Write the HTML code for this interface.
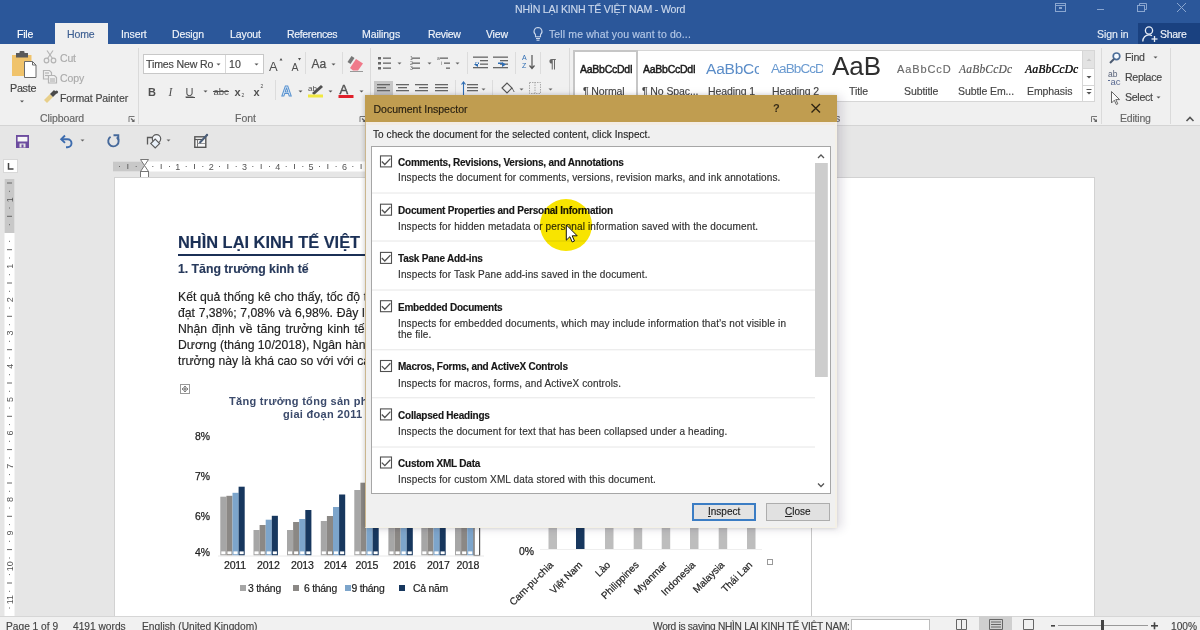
<!DOCTYPE html>
<html><head><meta charset="utf-8">
<style>
*{margin:0;padding:0;box-sizing:border-box}
html,body{width:1200px;height:630px;overflow:hidden;background:#e6e6e6;font-family:"Liberation Sans",sans-serif;position:relative}
.a{position:absolute;white-space:nowrap;-webkit-text-stroke:0.15px currentColor}
#titlebar{left:0;top:0;width:1200px;height:44px;background:#2b579a}
#ribbon{left:0;top:44px;width:1200px;height:82px;background:#f0f0f0;border-bottom:1px solid #d4d4d4}
#qat{left:0;top:126px;width:1200px;height:28px;background:#e6e6e6}
#page{left:114px;top:177px;width:981px;height:441px;background:#fff;border:1px solid #d2d2d2}
#status{left:0;top:616px;width:1200px;height:14px;background:#f1f1f1;border-top:1px solid #d6d6d6}
#dlg{left:365px;top:95px;width:472px;height:433px;background:#f0f0f0;border-left:1.5px solid #cbb68e;border-bottom:1px solid #f4f1e6;box-shadow:-1px 0 4px rgba(0,0,0,.15), 5px 1px 9px rgba(40,20,60,.13)}
</style></head><body>

<div id="titlebar" class="a"></div>
<div class="a" style="left:515px;top:3px;font-size:10.6px;color:#cbd8ec;letter-spacing:-0.2px">NHÌN LẠI KINH TẾ VIỆT NAM - Word</div>
<!-- window controls -->
<svg class="a" style="left:1050px;top:0px" width="150" height="20" viewBox="0 0 150 20">
 <g fill="none" stroke="#8aa6d0" stroke-width="1">
  <rect x="5.5" y="3.5" width="10" height="8"/>
  <line x1="5.5" y1="5.5" x2="15.5" y2="5.5"/>
  <rect x="9" y="7" width="3" height="2" fill="#8aa6d0" stroke="none"/>
  <line x1="47" y1="9.5" x2="54" y2="9.5"/>
  <rect x="87.5" y="5.5" width="7" height="6"/>
  <polyline points="89.5,5.5 89.5,3.5 96.5,3.5 96.5,9.5 94.5,9.5"/>
  <line x1="127" y1="3" x2="136" y2="12"/>
  <line x1="136" y1="3" x2="127" y2="12"/>
 </g>
</svg>
<div class="a" style="left:55px;top:23px;width:53px;height:22px;background:#f0f0f0"></div>
<div class="a" style="left:17px;top:28px;font-size:10.5px;color:#fff;letter-spacing:-0.2px">File</div>
<div class="a" style="left:67px;top:28px;font-size:10.5px;color:#3d5f92;letter-spacing:-0.1px">Home</div>
<div class="a" style="left:121px;top:28px;font-size:10.5px;color:#f0f4fa;letter-spacing:-0.1px">Insert</div>
<div class="a" style="left:172px;top:28px;font-size:10.5px;color:#f0f4fa;letter-spacing:-0.1px">Design</div>
<div class="a" style="left:230px;top:28px;font-size:10.5px;color:#f0f4fa;letter-spacing:-0.1px">Layout</div>
<div class="a" style="left:287px;top:28px;font-size:10.5px;color:#f0f4fa;letter-spacing:-0.35px">References</div>
<div class="a" style="left:362px;top:28px;font-size:10.5px;color:#f0f4fa;letter-spacing:-0.05px">Mailings</div>
<div class="a" style="left:428px;top:28px;font-size:10.5px;color:#f0f4fa;letter-spacing:-0.3px">Review</div>
<div class="a" style="left:486px;top:28px;font-size:10.5px;color:#f0f4fa;letter-spacing:-0.2px">View</div>
<svg class="a" style="left:532px;top:26px" width="12" height="16" viewBox="0 0 12 16"><g fill="none" stroke="#c9d6ea" stroke-width="1.1"><path d="M6 1.5a4 4 0 0 0-2.5 7.1v2.2h5V8.6A4 4 0 0 0 6 1.5z"/><line x1="4" y1="12.5" x2="8" y2="12.5"/><line x1="4.5" y1="14.2" x2="7.5" y2="14.2"/></g></svg>
<div class="a" style="left:549px;top:28px;font-size:10.5px;color:#b4c8e6;letter-spacing:0.12px">Tell me what you want to do...</div>
<div class="a" style="left:1097px;top:28px;font-size:10.5px;color:#e6edf6;letter-spacing:-0.1px">Sign in</div>
<div class="a" style="left:1138px;top:23px;width:62px;height:21px;background:#1a4180"></div>
<svg class="a" style="left:1141px;top:25px" width="18" height="18" viewBox="0 0 18 18"><g fill="none" stroke="#e6edf6" stroke-width="1.3"><circle cx="8" cy="5.5" r="3.6"/><path d="M1.8 16.5c0-3.8 2.6-6.6 6.2-6.6 1.2 0 2.2.3 3 .8"/><line x1="13.5" y1="11" x2="13.5" y2="17"/><line x1="10.5" y1="14" x2="16.5" y2="14"/></g></svg>
<div class="a" style="left:1160px;top:28px;font-size:10.5px;color:#f0f4fa;letter-spacing:-0.3px">Share</div>

<div id="ribbon" class="a"></div>
<!-- Clipboard group -->
<svg class="a" style="left:0;top:44px" width="140" height="82" viewBox="0 44 140 82">
 <rect x="12" y="55" width="19.5" height="21" fill="#f0c36b"/>
 <rect x="16" y="53" width="12" height="4.5" fill="#5a5a5a"/>
 <rect x="19.5" y="51" width="5" height="3" rx="1" fill="#5a5a5a"/>
 <path d="M24.5 61.5h8l3.5 3.5v12.5h-11.5z" fill="#fff" stroke="#6b6b6b" stroke-width="1"/>
 <path d="M32.5 61.5v3.5h3.5" fill="none" stroke="#6b6b6b" stroke-width="1"/>
 <path d="M20 100.5h4l-2 2z" fill="#555"/>
 <g fill="none" stroke="#b4b4b4" stroke-width="1.2">
  <circle cx="46.5" cy="60.5" r="2.3"/><circle cx="53.5" cy="60.5" r="2.3"/>
  <line x1="47.5" y1="58.5" x2="53" y2="50.5"/><line x1="52.5" y1="58.5" x2="47" y2="50.5"/>
  <path d="M43.5 70.5h6l2 2v6.5h-8z"/><path d="M48.5 75.5h6l2 2v5.5h-8z" fill="#f0f0f0"/>
  <line x1="45" y1="73" x2="49" y2="73"/><line x1="45" y1="75.5" x2="48" y2="75.5"/>
  <line x1="50" y1="79" x2="55" y2="79"/><line x1="50" y1="81" x2="55" y2="81"/>
 </g>
 <path d="M44 100l6-6 3 3-6 6z" fill="#e8cf8a"/>
 <path d="M50 94l4-4 3 3-4 4z" fill="#4a4a4a"/>
 <circle cx="56.5" cy="92" r="1.6" fill="#4a4a4a"/>
 <path d="M129.0 122v-5.5h5.5" fill="none" stroke="#777" stroke-width="1"/><path d="M131.0 118.5l3 3" stroke="#666" stroke-width="1.2"/><path d="M131.5 122h3v-3z" fill="#666"/>
 <line x1="138.5" y1="48" x2="138.5" y2="124" stroke="#dadada"/>
</svg>
<div class="a" style="left:10px;top:82px;font-size:10.8px;color:#444;letter-spacing:-0.3px">Paste</div>
<div class="a" style="left:60px;top:52px;font-size:10.5px;color:#aaa;letter-spacing:-0.2px">Cut</div>
<div class="a" style="left:60px;top:72px;font-size:10.5px;color:#aaa;letter-spacing:-0.1px">Copy</div>
<div class="a" style="left:60px;top:92px;font-size:10.5px;color:#444;letter-spacing:-0.1px">Format Painter</div>
<div class="a" style="left:40px;top:112px;font-size:10.5px;color:#666;letter-spacing:-0.1px">Clipboard</div>
<!-- Font group -->
<div class="a" style="left:143px;top:54px;width:121px;height:20px;background:#fff;border:1px solid #c8c8c8"></div>
<div class="a" style="left:225px;top:55px;width:1px;height:18px;background:#d8d8d8"></div>
<div class="a" style="left:146px;top:58px;font-size:10.6px;color:#444;letter-spacing:-0.15px">Times New Ro</div>
<div class="a" style="left:229px;top:58px;font-size:10.6px;color:#444">10</div>
<svg class="a" style="left:140px;top:44px" width="230" height="82" viewBox="140 44 230 82">
 <path d="M216.5 63.5h4l-2 2z" fill="#555"/><path d="M254.5 63.5h4l-2 2z" fill="#555"/>
 <g font-family="Liberation Sans" fill="#505050">
  <text x="269" y="70.5" font-size="13">A</text><path d="M279.5 60.5l1.5-2.5 1.5 2.5z" fill="#505050"/>
  <text x="291.5" y="70.5" font-size="10.5">A</text><path d="M298 58h3l-1.5 2.5z" fill="#505050"/>
  <text x="311.5" y="67.5" font-size="12" stroke="#505050" stroke-width="0.25">Aa</text>
  <text x="148" y="95.5" font-size="11" font-weight="bold">B</text>
  <text x="168.5" y="95.5" font-size="11.5" font-style="italic" font-family="Liberation Serif">I</text>
  <text x="185.5" y="95.5" font-size="11" text-decoration="underline">U</text>
  <text x="213.5" y="95" font-size="9.5">abc</text>
  <text x="234.5" y="95.5" font-size="11" font-weight="bold">x</text><text x="241.5" y="97" font-size="5">2</text>
  <text x="253.5" y="95.5" font-size="11" font-weight="bold">x</text><text x="260.5" y="88" font-size="5">2</text>
 </g>
 <line x1="213" y1="91.5" x2="229" y2="91.5" stroke="#505050" stroke-width="1"/>
 <line x1="186" y1="97.5" x2="195" y2="97.5" stroke="#505050" stroke-width="1"/>
 <path d="M331.5 63.5h4l-2 2z" fill="#555"/>
 <line x1="305.5" y1="52" x2="305.5" y2="74" stroke="#dcdcdc"/>
 <line x1="342.5" y1="52" x2="342.5" y2="74" stroke="#dcdcdc"/>
 <path d="M350 68l6-9 7 4.5-5 7h-5z" fill="#f07a8a"/><path d="M347.5 62l4-6 3 2-4 6z" fill="#777"/>
 <line x1="350" y1="71.5" x2="363" y2="71.5" stroke="#999"/>
 <path d="M203.5 90.5h4l-2 2z" fill="#555"/>
 <line x1="275.5" y1="80" x2="275.5" y2="100" stroke="#dcdcdc"/>
 <text x="281.5" y="96" font-size="14" font-weight="bold" font-family="Liberation Sans" fill="#e8f1fb" stroke="#5a93cf" stroke-width="1">A</text>
 <path d="M298.5 90.5h4l-2 2z" fill="#555"/>
 <text x="308" y="91" font-size="8" font-family="Liberation Sans" fill="#505050">ab</text>
 <path d="M312 93l9-8 2 2-9 8z" fill="#505050"/>
 <rect x="308" y="94.5" width="15" height="3" fill="#f0e840"/>
 <path d="M328.5 90.5h4l-2 2z" fill="#555"/>
 <text x="339.5" y="94" font-size="13" font-family="Liberation Sans" fill="#505050" stroke="#505050" stroke-width="0.4">A</text>
 <rect x="338.5" y="95" width="15" height="3" fill="#e0202a"/>
 <path d="M359.5 90.5h4l-2 2z" fill="#555"/>
</svg>
<div class="a" style="left:235px;top:112px;font-size:10.5px;color:#666">Font</div>
<svg class="a" style="left:355px;top:112px" width="12" height="12" viewBox="355 112 12 12"><path d="M360.0 122v-5.5h5.5" fill="none" stroke="#777" stroke-width="1"/><path d="M362.0 118.5l3 3" stroke="#666" stroke-width="1.2"/><path d="M362.5 122h3v-3z" fill="#666"/></svg>
<!-- Paragraph group -->
<svg class="a" style="left:365px;top:44px" width="210" height="52" viewBox="365 44 210 52">
 <line x1="370.5" y1="48" x2="370.5" y2="124" stroke="#dadada"/>
 <g fill="#666">
  <rect x="378" y="57" width="3" height="2.5"/><rect x="378" y="62" width="3" height="2.5"/><rect x="378" y="67" width="3" height="2.5"/>
  <rect x="383" y="57.5" width="8" height="1.3"/><rect x="383" y="62.5" width="8" height="1.3"/><rect x="383" y="67.5" width="8" height="1.3"/>
  <path d="M397.5 62.5h4l-2 2z"/>
  <rect x="412" y="57.5" width="8" height="1.3"/><rect x="412" y="62.5" width="8" height="1.3"/><rect x="412" y="67.5" width="8" height="1.3"/>
  <path d="M427.5 62.5h4l-2 2z"/>
  <rect x="440" y="57.5" width="8" height="1.3"/><rect x="444" y="62.5" width="6" height="1.3"/><rect x="446" y="67.5" width="4" height="1.3"/>
  <path d="M455.5 62.5h4l-2 2z"/>
  <rect x="473" y="56.5" width="15" height="1.3"/><rect x="480" y="60" width="8" height="1.3"/><rect x="480" y="63.5" width="8" height="1.3"/><rect x="473" y="67" width="15" height="1.3"/>
  <rect x="493" y="56.5" width="15" height="1.3"/><rect x="500" y="60" width="8" height="1.3"/><rect x="500" y="63.5" width="8" height="1.3"/><rect x="493" y="67" width="15" height="1.3"/>
 </g>
 <g font-family="Liberation Sans" font-size="5" fill="#666"><text x="410" y="60">1</text><text x="410" y="65">2</text><text x="410" y="70">3</text><text x="437" y="60">a</text><text x="441" y="65">i</text></g>
 <path d="M478 62l-4 2.5 4 2.5z M475 62.5h4v1.5h-4z" fill="#2f6db3"/>
 <path d="M502 62l4 2.5-4 2.5z M498 62.5h5v1.5h-5z" fill="#2f6db3"/>
 <g font-family="Liberation Sans" font-size="7" fill="#2f6db3"><text x="522" y="60">A</text><text x="522" y="68">Z</text></g>
 <path d="M532 55v13M529.5 65.5l2.5 3 2.5-3" fill="none" stroke="#555" stroke-width="1.2"/>
 <text x="549" y="68" font-size="13" font-family="Liberation Sans" font-weight="bold" fill="#666">¶</text>
 <line x1="467.5" y1="52" x2="467.5" y2="74" stroke="#dcdcdc"/>
 <line x1="515.5" y1="52" x2="515.5" y2="74" stroke="#dcdcdc"/>
 <line x1="540.5" y1="52" x2="540.5" y2="74" stroke="#dcdcdc"/>
 <rect x="374" y="81" width="19" height="14" fill="#c6c6c6"/>
 <g fill="#666">
  <rect x="377" y="84" width="13" height="1.3"/><rect x="377" y="87" width="9" height="1.3"/><rect x="377" y="90" width="13" height="1.3"/>
  <rect x="396" y="84" width="13" height="1.3"/><rect x="398" y="87" width="9" height="1.3"/><rect x="396" y="90" width="13" height="1.3"/>
  <rect x="415" y="84" width="13" height="1.3"/><rect x="419" y="87" width="9" height="1.3"/><rect x="415" y="90" width="13" height="1.3"/>
  <rect x="435" y="84" width="13" height="1.3"/><rect x="435" y="87" width="13" height="1.3"/><rect x="435" y="90" width="13" height="1.3"/>
  <rect x="467" y="84" width="11" height="1.3"/><rect x="467" y="87" width="11" height="1.3"/><rect x="467" y="90" width="11" height="1.3"/>
  <path d="M481.5 88.5h4l-2 2z"/><path d="M519.5 88.5h4l-2 2z"/><path d="M548.5 88.5h4l-2 2z"/>
 </g>
 <path d="M463.5 82v13M461.5 84.5l2-2.5 2 2.5" fill="none" stroke="#2f6db3" stroke-width="1.1"/>
 <line x1="455.5" y1="80" x2="455.5" y2="96" stroke="#dcdcdc"/>
 <line x1="492.5" y1="80" x2="492.5" y2="96" stroke="#dcdcdc"/>
 <path d="M502 88l5-5 5 5-5 5z" fill="none" stroke="#555" stroke-width="1.1"/><path d="M512 88c1 2 2 3 2 4" stroke="#555" fill="none"/>
 <rect x="529.5" y="82.5" width="11" height="11" fill="none" stroke="#aaa" stroke-dasharray="1.5 1"/>
 <line x1="535" y1="82" x2="535" y2="94" stroke="#aaa" stroke-dasharray="1.5 1"/>
 <line x1="569.5" y1="48" x2="569.5" y2="124" stroke="#dadada"/>
</svg>
<!-- Styles gallery -->
<div class="a" style="left:573px;top:50px;width:522px;height:52px;background:#fff;border:1px solid #d6d6d6"></div>
<div class="a" style="left:573px;top:50px;width:65px;height:52px;border:2px solid #c6c6c6"></div>
<div class="a" style="left:1082px;top:50px;width:13px;height:52px;border:1px solid #d6d6d6;background:#fff"></div>
<div class="a" style="left:1083px;top:51px;width:11px;height:17px;background:#e3e3e3"></div>
<div class="a" style="left:1082px;top:68px;width:13px;height:1px;background:#d6d6d6"></div>
<div class="a" style="left:1082px;top:85px;width:13px;height:1px;background:#d6d6d6"></div>
<svg class="a" style="left:1082px;top:50px" width="14" height="52" viewBox="0 0 14 52">
 <path d="M4.5 11h5l-2.5-2.5z" fill="#c8c8c8"/>
 <path d="M4.5 26h5l-2.5 2.5z" fill="#555"/>
 <rect x="4.5" y="39" width="5" height="1" fill="#555"/><path d="M4.5 42h5l-2.5 2.5z" fill="#555"/>
</svg>
<div class="a" style="left:580px;top:63px;font-size:10.5px;color:#1a1a1a;-webkit-text-stroke:0.45px #1a1a1a;letter-spacing:-0.25px;width:52px;overflow:hidden">AaBbCcDdE</div>
<div class="a" style="left:643px;top:63px;font-size:10.5px;color:#1a1a1a;-webkit-text-stroke:0.45px #1a1a1a;letter-spacing:-0.25px;width:52px;overflow:hidden">AaBbCcDdE</div>
<div class="a" style="left:706px;top:60px;font-size:15.5px;color:#5b8dc8;-webkit-text-stroke:0;letter-spacing:-0.2px;width:53px;overflow:hidden">AaBbCc</div>
<div class="a" style="left:771px;top:61px;font-size:13.5px;color:#6a9ad0;-webkit-text-stroke:0;letter-spacing:-0.9px;width:52px;overflow:hidden">AaBbCcD</div>
<div class="a" style="left:832px;top:51px;font-size:26px;color:#2e2e2e;-webkit-text-stroke:0;letter-spacing:0px">AaB</div>
<div class="a" style="left:897px;top:63px;font-size:11px;color:#6a6a6a;letter-spacing:0.9px">AaBbCcD</div>
<div class="a" style="left:959px;top:63px;font-size:11.5px;color:#555;font-style:italic;font-family:'Liberation Serif';letter-spacing:0.2px">AaBbCcDc</div>
<div class="a" style="left:1025px;top:63px;font-size:11.5px;color:#222;font-style:italic;text-shadow:0.3px 0 0 #222;font-family:'Liberation Serif';letter-spacing:0.2px">AaBbCcDc</div>
<div class="a" style="left:583px;top:85px;font-size:10.5px;color:#444;letter-spacing:-0.1px">¶ Normal</div>
<div class="a" style="left:642px;top:85px;font-size:10.5px;color:#444;letter-spacing:-0.1px">¶ No Spac...</div>
<div class="a" style="left:708px;top:85px;font-size:10.5px;color:#444;letter-spacing:-0.1px">Heading 1</div>
<div class="a" style="left:772px;top:85px;font-size:10.5px;color:#444;letter-spacing:-0.1px">Heading 2</div>
<div class="a" style="left:849px;top:85px;font-size:10.5px;color:#444;letter-spacing:-0.1px">Title</div>
<div class="a" style="left:904px;top:85px;font-size:10.5px;color:#444;letter-spacing:-0.1px">Subtitle</div>
<div class="a" style="left:958px;top:85px;font-size:10.5px;color:#444;letter-spacing:-0.1px">Subtle Em...</div>
<div class="a" style="left:1027px;top:85px;font-size:10.5px;color:#444;letter-spacing:-0.1px">Emphasis</div>
<div class="a" style="left:835px;top:112px;font-size:10.5px;color:#666">s</div>
<!-- Editing -->
<svg class="a" style="left:1090px;top:44px" width="110" height="82" viewBox="1090 44 110 82">
 <path d="M1091.5 122v-5.5h5.5" fill="none" stroke="#777" stroke-width="1"/><path d="M1093.5 118.5l3 3" stroke="#666" stroke-width="1.2"/><path d="M1094 122h3v-3z" fill="#666"/>
 <line x1="1101.5" y1="48" x2="1101.5" y2="124" stroke="#dadada"/>
 <line x1="1170.5" y1="48" x2="1170.5" y2="124" stroke="#dadada"/>
 <circle cx="1116.5" cy="56.3" r="3.3" fill="#f7fbff" stroke="#4b6d98" stroke-width="1.7"/>
 <line x1="1114" y1="59" x2="1110" y2="63" stroke="#4a5a70" stroke-width="2"/>
 <path d="M1153.5 56.5h4l-2 2z" fill="#555"/>
 <g font-family="Liberation Sans"><text x="1108" y="76.5" font-size="8.5" fill="#566078">ab</text><text x="1110.5" y="84.5" font-size="9.5" fill="#5b6b92">ac</text></g><path d="M1108 80.5h2" stroke="#5b6b92"/>
 <path d="M1111.5 91.5v11.5l2.8-2.8 2 4.3 1.5-.7-2-4.2h3.8z" fill="#fafafa" stroke="#666" stroke-width="1"/>
 <path d="M1156.5 96.5h4l-2 2z" fill="#555"/>
 <path d="M1186.5 121l3.5-3.5 3.5 3.5" fill="none" stroke="#555" stroke-width="1.6"/>
</svg>
<div class="a" style="left:1125px;top:51px;font-size:10.6px;color:#444;letter-spacing:-0.2px">Find</div>
<div class="a" style="left:1125px;top:71px;font-size:10.6px;color:#444;letter-spacing:-0.3px">Replace</div>
<div class="a" style="left:1125px;top:91px;font-size:10.6px;color:#444;letter-spacing:-0.3px">Select</div>
<div class="a" style="left:1120px;top:112px;font-size:10.5px;color:#666;letter-spacing:-0.2px">Editing</div>

<div id="qat" class="a"></div>
<svg class="a" style="left:0;top:126px" width="220" height="28" viewBox="0 126 220 28">
 <path d="M16.8 135.8h11.4v11.4h-11.4z" fill="#f7f7f7" stroke="#6d4c9f" stroke-width="1.6"/>
 <rect x="16" y="135" width="13" height="1.8" fill="#6d4c9f"/>
 <rect x="16" y="141.5" width="13" height="6" fill="#6d4c9f"/>
 <rect x="19.5" y="143.5" width="6" height="4" fill="#e6e6e6"/>
 <rect x="21.5" y="144.5" width="2" height="3" fill="#6d4c9f"/>
 <path d="M61.5 139.2h6a4 4 0 0 1 0 8h-1.5" fill="none" stroke="#3d6cae" stroke-width="1.9"/>
 <path d="M65 135.5l-3.8 3.7 3.8 3.7" fill="none" stroke="#3d6cae" stroke-width="1.9"/>
 <path d="M80.5 139.5h4l-2 2z" fill="#666"/>
 <path d="M116.8 137.2a5.2 5.2 0 1 1-6.2-.4" fill="none" stroke="#46699b" stroke-width="1.9"/>
 <path d="M113.5 135.2h4.8v4.6" fill="none" stroke="#46699b" stroke-width="1.9"/>
 <path d="M147.5 144.5v-7h7" fill="none" stroke="#5a5a5a" stroke-width="1.3"/>
 <circle cx="156.5" cy="138.8" r="4.2" fill="#f3f6fa" stroke="#5a5a5a" stroke-width="1.2"/>
 <path d="M155.2 139.2l4.4 4.4-4.4 4.4-4.4-4.4z" fill="#e9f1fa" stroke="#5a5a5a" stroke-width="1.2"/>
 <path d="M166.5 139.5h4l-2 2z" fill="#666"/>
 <rect x="194.8" y="136.8" width="11" height="10.5" fill="#f7f7f7" stroke="#555" stroke-width="1.4"/>
 <line x1="194.8" y1="139.5" x2="202" y2="139.5" stroke="#555" stroke-width="1.2"/>
 <line x1="197.5" y1="139.5" x2="197.5" y2="147" stroke="#777" stroke-width="1"/>
 <line x1="197.5" y1="143.5" x2="205" y2="143.5" stroke="#999" stroke-width="1"/>
 <path d="M199.5 143l7-7.5" stroke="#4b5e78" stroke-width="2"/>
 <circle cx="207" cy="135" r="1.2" fill="#4b5e78"/>
</svg>
<svg class="a" style="left:110px;top:155px" width="260" height="26" viewBox="110 155 260 26">
<rect x="113" y="161.5" width="257" height="10" fill="#fff"/>
<rect x="113" y="161.5" width="31.5" height="10" fill="#c8c8c8"/>
<rect x="119.0" y="166" width="1" height="1" fill="#666"/>
<line x1="127.8" y1="164" x2="127.8" y2="169" stroke="#666" stroke-width="1"/>
<rect x="135.7" y="166" width="1" height="1" fill="#666"/>
<rect x="152.3" y="166" width="1" height="1" fill="#666"/>
<line x1="161.2" y1="164" x2="161.2" y2="169" stroke="#666" stroke-width="1"/>
<rect x="169.0" y="166" width="1" height="1" fill="#666"/>
<text x="177.8" y="170" font-size="9" text-anchor="middle" font-family="Liberation Sans" fill="#555">1</text>
<rect x="185.7" y="166" width="1" height="1" fill="#666"/>
<line x1="194.5" y1="164" x2="194.5" y2="169" stroke="#666" stroke-width="1"/>
<rect x="202.3" y="166" width="1" height="1" fill="#666"/>
<text x="211.2" y="170" font-size="9" text-anchor="middle" font-family="Liberation Sans" fill="#555">2</text>
<rect x="219.0" y="166" width="1" height="1" fill="#666"/>
<line x1="227.8" y1="164" x2="227.8" y2="169" stroke="#666" stroke-width="1"/>
<rect x="235.7" y="166" width="1" height="1" fill="#666"/>
<text x="244.5" y="170" font-size="9" text-anchor="middle" font-family="Liberation Sans" fill="#555">3</text>
<rect x="252.3" y="166" width="1" height="1" fill="#666"/>
<line x1="261.2" y1="164" x2="261.2" y2="169" stroke="#666" stroke-width="1"/>
<rect x="269.0" y="166" width="1" height="1" fill="#666"/>
<text x="277.8" y="170" font-size="9" text-anchor="middle" font-family="Liberation Sans" fill="#555">4</text>
<rect x="285.7" y="166" width="1" height="1" fill="#666"/>
<line x1="294.5" y1="164" x2="294.5" y2="169" stroke="#666" stroke-width="1"/>
<rect x="302.3" y="166" width="1" height="1" fill="#666"/>
<text x="311.1" y="170" font-size="9" text-anchor="middle" font-family="Liberation Sans" fill="#555">5</text>
<rect x="319.0" y="166" width="1" height="1" fill="#666"/>
<line x1="327.8" y1="164" x2="327.8" y2="169" stroke="#666" stroke-width="1"/>
<rect x="335.6" y="166" width="1" height="1" fill="#666"/>
<text x="344.5" y="170" font-size="9" text-anchor="middle" font-family="Liberation Sans" fill="#555">6</text>
<rect x="352.3" y="166" width="1" height="1" fill="#666"/>
<line x1="361.1" y1="164" x2="361.1" y2="169" stroke="#666" stroke-width="1"/>
<path d="M140.5 159.5h8l-4 6z M140.5 171.5h8l-4-6z" fill="#fff" stroke="#777" stroke-width="1"/>
<rect x="140.5" y="171.5" width="8" height="6" fill="#fff" stroke="#777" stroke-width="1"/>
</svg>
<svg class="a" style="left:0;top:155px" width="20" height="461" viewBox="0 155 20 461">
<rect x="3.5" y="159.5" width="14" height="13" fill="#fff" stroke="#d8d8d8"/>
<path d="M8.5 163v6h5" fill="none" stroke="#444" stroke-width="1.5"/>
<rect x="4.5" y="179" width="10" height="437" fill="#fff"/>
<rect x="4.5" y="179" width="10" height="54" fill="#c8c8c8"/>
<line x1="7" y1="183.0" x2="12" y2="183.0" stroke="#666" stroke-width="1"/>
<rect x="9" y="190.8" width="1" height="1" fill="#666"/>
<text x="0" y="0" font-size="9" text-anchor="middle" font-family="Liberation Sans" fill="#555" transform="translate(12.5 199.7) rotate(-90)">1</text>
<rect x="9" y="207.5" width="1" height="1" fill="#666"/>
<line x1="7" y1="216.3" x2="12" y2="216.3" stroke="#666" stroke-width="1"/>
<rect x="9" y="224.2" width="1" height="1" fill="#666"/>
<rect x="9" y="240.8" width="1" height="1" fill="#666"/>
<line x1="7" y1="249.7" x2="12" y2="249.7" stroke="#666" stroke-width="1"/>
<rect x="9" y="257.5" width="1" height="1" fill="#666"/>
<text x="0" y="0" font-size="9" text-anchor="middle" font-family="Liberation Sans" fill="#555" transform="translate(12.5 266.3) rotate(-90)">1</text>
<rect x="9" y="274.2" width="1" height="1" fill="#666"/>
<line x1="7" y1="283.0" x2="12" y2="283.0" stroke="#666" stroke-width="1"/>
<rect x="9" y="290.8" width="1" height="1" fill="#666"/>
<text x="0" y="0" font-size="9" text-anchor="middle" font-family="Liberation Sans" fill="#555" transform="translate(12.5 299.7) rotate(-90)">2</text>
<rect x="9" y="307.5" width="1" height="1" fill="#666"/>
<line x1="7" y1="316.3" x2="12" y2="316.3" stroke="#666" stroke-width="1"/>
<rect x="9" y="324.2" width="1" height="1" fill="#666"/>
<text x="0" y="0" font-size="9" text-anchor="middle" font-family="Liberation Sans" fill="#555" transform="translate(12.5 333.0) rotate(-90)">3</text>
<rect x="9" y="340.8" width="1" height="1" fill="#666"/>
<line x1="7" y1="349.7" x2="12" y2="349.7" stroke="#666" stroke-width="1"/>
<rect x="9" y="357.5" width="1" height="1" fill="#666"/>
<text x="0" y="0" font-size="9" text-anchor="middle" font-family="Liberation Sans" fill="#555" transform="translate(12.5 366.3) rotate(-90)">4</text>
<rect x="9" y="374.2" width="1" height="1" fill="#666"/>
<line x1="7" y1="383.0" x2="12" y2="383.0" stroke="#666" stroke-width="1"/>
<rect x="9" y="390.8" width="1" height="1" fill="#666"/>
<text x="0" y="0" font-size="9" text-anchor="middle" font-family="Liberation Sans" fill="#555" transform="translate(12.5 399.6) rotate(-90)">5</text>
<rect x="9" y="407.5" width="1" height="1" fill="#666"/>
<line x1="7" y1="416.3" x2="12" y2="416.3" stroke="#666" stroke-width="1"/>
<rect x="9" y="424.1" width="1" height="1" fill="#666"/>
<text x="0" y="0" font-size="9" text-anchor="middle" font-family="Liberation Sans" fill="#555" transform="translate(12.5 433.0) rotate(-90)">6</text>
<rect x="9" y="440.8" width="1" height="1" fill="#666"/>
<line x1="7" y1="449.6" x2="12" y2="449.6" stroke="#666" stroke-width="1"/>
<rect x="9" y="457.5" width="1" height="1" fill="#666"/>
<text x="0" y="0" font-size="9" text-anchor="middle" font-family="Liberation Sans" fill="#555" transform="translate(12.5 466.3) rotate(-90)">7</text>
<rect x="9" y="474.1" width="1" height="1" fill="#666"/>
<line x1="7" y1="483.0" x2="12" y2="483.0" stroke="#666" stroke-width="1"/>
<rect x="9" y="490.8" width="1" height="1" fill="#666"/>
<text x="0" y="0" font-size="9" text-anchor="middle" font-family="Liberation Sans" fill="#555" transform="translate(12.5 499.6) rotate(-90)">8</text>
<rect x="9" y="507.5" width="1" height="1" fill="#666"/>
<line x1="7" y1="516.3" x2="12" y2="516.3" stroke="#666" stroke-width="1"/>
<rect x="9" y="524.1" width="1" height="1" fill="#666"/>
<text x="0" y="0" font-size="9" text-anchor="middle" font-family="Liberation Sans" fill="#555" transform="translate(12.5 533.0) rotate(-90)">9</text>
<rect x="9" y="540.8" width="1" height="1" fill="#666"/>
<line x1="7" y1="549.6" x2="12" y2="549.6" stroke="#666" stroke-width="1"/>
<rect x="9" y="557.5" width="1" height="1" fill="#666"/>
<text x="0" y="0" font-size="9" text-anchor="middle" font-family="Liberation Sans" fill="#555" transform="translate(12.5 566.3) rotate(-90)">10</text>
<rect x="9" y="574.1" width="1" height="1" fill="#666"/>
<line x1="7" y1="583.0" x2="12" y2="583.0" stroke="#666" stroke-width="1"/>
<rect x="9" y="590.8" width="1" height="1" fill="#666"/>
<text x="0" y="0" font-size="9" text-anchor="middle" font-family="Liberation Sans" fill="#555" transform="translate(12.5 599.6) rotate(-90)">11</text>
<rect x="9" y="607.5" width="1" height="1" fill="#666"/>
</svg>
<div id="page" class="a"></div>
<div class="a" style="left:811px;top:525px;width:1px;height:91px;background:#c8c8c8"></div>
<div class="a" style="left:178px;top:232.5px;font-size:16.4px;font-weight:bold;color:#1b3056;letter-spacing:0px">NHÌN LẠI KINH TẾ VIỆT NAM</div>
<div class="a" style="left:178px;top:254px;width:200px;height:2px;background:#1b3056"></div>
<div class="a" style="left:178px;top:261.5px;font-size:12.25px;font-weight:bold;color:#283a5c">1. Tăng trưởng kinh tế</div>
<div class="a" style="left:178px;top:289.0px;font-size:12.2px;line-height:16.4px;color:#222;word-spacing:0.2px">Kết quả thống kê cho thấy, tốc độ tăng</div>
<div class="a" style="left:178px;top:305.0px;font-size:12.2px;line-height:16.4px;color:#222;word-spacing:0.3px">đạt 7,38%; 7,08% và 6,98%. Đây là</div>
<div class="a" style="left:178px;top:321.0px;font-size:12.2px;line-height:16.4px;color:#222;word-spacing:1.3px">Nhận định về tăng trưởng kinh tế Việt</div>
<div class="a" style="left:178px;top:337.0px;font-size:12.2px;line-height:16.4px;color:#222;word-spacing:0px">Dương (tháng 10/2018), Ngân hàng</div>
<div class="a" style="left:178px;top:353.0px;font-size:12.2px;line-height:16.4px;color:#222;word-spacing:0px">trưởng này là khá cao so với với các</div>

<svg class="a" style="left:0;top:0" width="1200" height="630" viewBox="0 0 1200 630">
<rect x="180.5" y="384.5" width="9" height="9" fill="#fff" stroke="#999"/>
<path d="M185 386v6M182 389h6" stroke="#555" stroke-width="0.8"/><path d="M183.5 387.5l1.5-1.5 1.5 1.5M183.5 390.5l1.5 1.5 1.5-1.5M183.5 387.5l-1.5 1.5 1.5 1.5M186.5 387.5l1.5 1.5-1.5 1.5" fill="none" stroke="#555" stroke-width="0.6"/>
<g font-family="Liberation Sans" font-weight="bold" font-size="11" fill="#3b4a6b" letter-spacing="0.3"><text x="229" y="405">Tăng trưởng tổng sản phẩm</text><text x="283" y="418">giai đoạn 2011 - 2018</text></g>
<g font-family="Liberation Sans" font-size="10.4" fill="#1e1e1e" stroke="#1e1e1e" stroke-width="0.25">
<text x="195" y="439.8">8%</text>
<text x="195" y="479.8">7%</text>
<text x="195" y="519.8">6%</text>
<text x="195" y="555.8">4%</text>
</g>
<rect x="220.3" y="496.7" width="6.1" height="58.8" fill="#a6a6a6"/>
<rect x="221.3" y="551.4" width="4.1" height="2.8" fill="#fff"/>
<rect x="226.4" y="495.8" width="6.1" height="59.7" fill="#8b8885"/>
<rect x="227.4" y="551.4" width="4.1" height="2.8" fill="#fff"/>
<rect x="232.5" y="492.8" width="6.1" height="62.7" fill="#7da5cb"/>
<rect x="233.5" y="551.4" width="4.1" height="2.8" fill="#fff"/>
<rect x="238.6" y="486.7" width="6.1" height="68.8" fill="#17375e"/>
<rect x="239.6" y="551.4" width="4.1" height="2.8" fill="#fff"/>
<rect x="253.5" y="530.0" width="6.1" height="25.5" fill="#a6a6a6"/>
<rect x="254.5" y="551.4" width="4.1" height="2.8" fill="#fff"/>
<rect x="259.6" y="525.0" width="6.1" height="30.5" fill="#8b8885"/>
<rect x="260.6" y="551.4" width="4.1" height="2.8" fill="#fff"/>
<rect x="265.7" y="519.7" width="6.1" height="35.8" fill="#7da5cb"/>
<rect x="266.7" y="551.4" width="4.1" height="2.8" fill="#fff"/>
<rect x="271.8" y="515.8" width="6.1" height="39.7" fill="#17375e"/>
<rect x="272.8" y="551.4" width="4.1" height="2.8" fill="#fff"/>
<rect x="287.0" y="530.0" width="6.1" height="25.5" fill="#a6a6a6"/>
<rect x="288.0" y="551.4" width="4.1" height="2.8" fill="#fff"/>
<rect x="293.1" y="522.0" width="6.1" height="33.5" fill="#8b8885"/>
<rect x="294.1" y="551.4" width="4.1" height="2.8" fill="#fff"/>
<rect x="299.2" y="519.0" width="6.1" height="36.5" fill="#7da5cb"/>
<rect x="300.2" y="551.4" width="4.1" height="2.8" fill="#fff"/>
<rect x="305.3" y="510.0" width="6.1" height="45.5" fill="#17375e"/>
<rect x="306.3" y="551.4" width="4.1" height="2.8" fill="#fff"/>
<rect x="320.8" y="521.0" width="6.1" height="34.5" fill="#a6a6a6"/>
<rect x="321.8" y="551.4" width="4.1" height="2.8" fill="#fff"/>
<rect x="326.9" y="516.0" width="6.1" height="39.5" fill="#8b8885"/>
<rect x="327.9" y="551.4" width="4.1" height="2.8" fill="#fff"/>
<rect x="333.0" y="507.0" width="6.1" height="48.5" fill="#7da5cb"/>
<rect x="334.0" y="551.4" width="4.1" height="2.8" fill="#fff"/>
<rect x="339.1" y="494.5" width="6.1" height="61.0" fill="#17375e"/>
<rect x="340.1" y="551.4" width="4.1" height="2.8" fill="#fff"/>
<rect x="354.3" y="490.0" width="6.1" height="65.5" fill="#a6a6a6"/>
<rect x="355.3" y="551.4" width="4.1" height="2.8" fill="#fff"/>
<rect x="360.4" y="482.7" width="6.1" height="72.8" fill="#8b8885"/>
<rect x="361.4" y="551.4" width="4.1" height="2.8" fill="#fff"/>
<rect x="366.5" y="470.0" width="6.1" height="85.5" fill="#7da5cb"/>
<rect x="367.5" y="551.4" width="4.1" height="2.8" fill="#fff"/>
<rect x="372.6" y="470.0" width="6.1" height="85.5" fill="#17375e"/>
<rect x="373.6" y="551.4" width="4.1" height="2.8" fill="#fff"/>
<rect x="388.4" y="515.0" width="6.1" height="40.5" fill="#a6a6a6"/>
<rect x="389.4" y="551.4" width="4.1" height="2.8" fill="#fff"/>
<rect x="394.5" y="512.0" width="6.1" height="43.5" fill="#8b8885"/>
<rect x="395.5" y="551.4" width="4.1" height="2.8" fill="#fff"/>
<rect x="400.6" y="508.0" width="6.1" height="47.5" fill="#7da5cb"/>
<rect x="401.6" y="551.4" width="4.1" height="2.8" fill="#fff"/>
<rect x="406.7" y="505.0" width="6.1" height="50.5" fill="#17375e"/>
<rect x="407.7" y="551.4" width="4.1" height="2.8" fill="#fff"/>
<rect x="421.3" y="515.0" width="6.1" height="40.5" fill="#a6a6a6"/>
<rect x="422.3" y="551.4" width="4.1" height="2.8" fill="#fff"/>
<rect x="427.4" y="512.0" width="6.1" height="43.5" fill="#8b8885"/>
<rect x="428.4" y="551.4" width="4.1" height="2.8" fill="#fff"/>
<rect x="433.5" y="508.0" width="6.1" height="47.5" fill="#7da5cb"/>
<rect x="434.5" y="551.4" width="4.1" height="2.8" fill="#fff"/>
<rect x="439.6" y="505.0" width="6.1" height="50.5" fill="#17375e"/>
<rect x="440.6" y="551.4" width="4.1" height="2.8" fill="#fff"/>
<rect x="455.0" y="515.0" width="6.1" height="40.5" fill="#a6a6a6"/>
<rect x="456.0" y="551.4" width="4.1" height="2.8" fill="#fff"/>
<rect x="461.1" y="512.0" width="6.1" height="43.5" fill="#8b8885"/>
<rect x="462.1" y="551.4" width="4.1" height="2.8" fill="#fff"/>
<rect x="467.2" y="508.0" width="6.1" height="47.5" fill="#7da5cb"/>
<rect x="468.2" y="551.4" width="4.1" height="2.8" fill="#fff"/>
<rect x="474" y="505" width="5.6" height="50.5" fill="#fff" stroke="#555" stroke-width="1.2"/>
<line x1="218" y1="556" x2="484" y2="556" stroke="#e8e8e8"/>
<g font-family="Liberation Sans" font-size="10.6" fill="#1e1e1e" stroke="#1e1e1e" stroke-width="0.2" letter-spacing="-0.25">
<text x="224" y="569">2011</text>
<text x="257" y="569">2012</text>
<text x="291" y="569">2013</text>
<text x="324" y="569">2014</text>
<text x="355.5" y="569">2015</text>
<text x="393" y="569">2016</text>
<text x="427" y="569">2017</text>
<text x="456.5" y="569">2018</text>
</g>
<rect x="240" y="585" width="6" height="6" fill="#a6a6a6"/>
<rect x="293" y="585" width="6" height="6" fill="#8b8885"/>
<rect x="345" y="585" width="6" height="6" fill="#7da5cb"/>
<rect x="399" y="585" width="6" height="6" fill="#17375e"/>
<g font-family="Liberation Sans" font-size="10.4" fill="#1e1e1e" stroke="#1e1e1e" stroke-width="0.2" letter-spacing="-0.25">
<text x="248" y="592">3 tháng</text>
<text x="304" y="592">6 tháng</text>
<text x="351.5" y="592">9 tháng</text>
<text x="413" y="592">Cả năm</text>
</g>
<text x="519" y="555" font-family="Liberation Sans" font-size="10.4" fill="#1e1e1e" stroke="#1e1e1e" stroke-width="0.25">0%</text>
<rect x="548.5" y="520" width="8.5" height="29.5" fill="#bdbdbd"/>
<rect x="576" y="520" width="8.5" height="29.5" fill="#17375e"/>
<rect x="605" y="520" width="8.5" height="29.5" fill="#bdbdbd"/>
<rect x="633.7" y="520" width="8.5" height="29.5" fill="#bdbdbd"/>
<rect x="661.7" y="520" width="8.5" height="29.5" fill="#bdbdbd"/>
<rect x="690" y="520" width="8.5" height="29.5" fill="#bdbdbd"/>
<rect x="718.7" y="520" width="8.5" height="29.5" fill="#bdbdbd"/>
<rect x="747" y="520" width="8.5" height="29.5" fill="#bdbdbd"/>
<line x1="540" y1="549.5" x2="762" y2="549.5" stroke="#eee"/>
<rect x="767.5" y="559.5" width="5" height="5" fill="#fff" stroke="#999"/>
<g font-family="Liberation Sans" font-size="10" fill="#1e1e1e" stroke="#1e1e1e" stroke-width="0.2" text-anchor="end">
<text transform="translate(554 565.5) rotate(-45)">Cam-pu-chia</text>
<text transform="translate(583 565.5) rotate(-45)">Việt Nam</text>
<text transform="translate(611 565.5) rotate(-45)">Lào</text>
<text transform="translate(639.5 565.5) rotate(-45)">Philippines</text>
<text transform="translate(667.5 565.5) rotate(-45)">Myanmar</text>
<text transform="translate(696 565.5) rotate(-45)">Indonesia</text>
<text transform="translate(725 565.5) rotate(-45)">Malaysia</text>
<text transform="translate(753 565.5) rotate(-45)">Thái Lan</text>
</g>
</svg>
<div id="status" class="a"></div>
<div class="a" style="left:6px;top:621px;font-size:10.2px;color:#444">Page 1 of 9</div>
<div class="a" style="left:73px;top:621px;font-size:10.2px;color:#444">4191 words</div>
<div class="a" style="left:142px;top:621px;font-size:10.2px;color:#444">English (United Kingdom)</div>
<div class="a" style="left:653px;top:621px;font-size:10.2px;color:#444;letter-spacing:-0.3px">Word is saving NHÌN LẠI KINH TẾ VIỆT NAM:</div>
<div class="a" style="left:851px;top:619px;width:79px;height:13px;background:#fff;border:1px solid #bcbcbc"></div>
<div class="a" style="left:979px;top:616px;width:33px;height:14px;background:#cfcfcf"></div>
<svg class="a" style="left:940px;top:616px" width="260" height="14" viewBox="940 616 260 14">
 <g fill="none" stroke="#666" stroke-width="1">
  <path d="M956.5 619.5h5v10h-5z M961.5 619.5h5v10h-5z"/>
  <path d="M989.5 619.5h13v10h-13z"/>
  <line x1="991" y1="622" x2="1001" y2="622"/><line x1="991" y1="624.5" x2="1001" y2="624.5"/><line x1="991" y1="627" x2="1001" y2="627"/>
  <path d="M1023.5 619.5h10v10h-10z"/>
 </g>
 <rect x="1051" y="625" width="4" height="1.6" fill="#444"/>
 <line x1="1058" y1="625.5" x2="1148" y2="625.5" stroke="#999"/>
 <rect x="1101" y="620" width="3" height="10" fill="#444"/>
 <rect x="1151" y="625" width="7" height="1.6" fill="#444"/><rect x="1153.7" y="622.3" width="1.6" height="7" fill="#444"/>
</svg>
<div class="a" style="left:1171px;top:621px;font-size:10.2px;color:#444">100%</div>

<div id="dlg" class="a"></div>
<div class="a" style="left:365px;top:95px;width:472px;height:27px;background:#c09d50"></div>
<div class="a" style="left:366px;top:122px;width:470px;height:3px;background:#f3ece4"></div>
<div class="a" style="left:835px;top:122px;width:2px;height:406px;background:#f4f0e6"></div>
<div class="a" style="left:373.5px;top:102.7px;font-size:10.5px;color:#241d10">Document Inspector</div>
<div class="a" style="left:373px;top:129.3px;font-size:10px;letter-spacing:0.08px;color:#262626">To check the document for the selected content, click Inspect.</div>
<div class="a" style="left:371px;top:146px;width:460px;height:348px;background:#fff;border:1px solid #a6a6a6"></div>
<svg class="a" style="left:365px;top:95px" width="472" height="433" viewBox="365 95 472 433">
<text x="773" y="112" font-family="Liberation Sans" font-size="11" font-weight="bold" fill="#3a2e18">?</text>
<path d="M811.5 104l8.5 8.5M820 104l-8.5 8.5" stroke="#2e2412" stroke-width="1.4"/>
<rect x="815" y="163" width="12.8" height="214" fill="#cdcdcd"/>
<path d="M818 158l3-3 3 3" fill="none" stroke="#555" stroke-width="1.3"/>
<path d="M818 483.5l3 3 3-3" fill="none" stroke="#555" stroke-width="1.3"/>
<line x1="372" y1="193" x2="815" y2="193" stroke="#e6e6e6" stroke-width="1"/>
<line x1="372" y1="241" x2="815" y2="241" stroke="#e6e6e6" stroke-width="1"/>
<line x1="372" y1="290" x2="815" y2="290" stroke="#e6e6e6" stroke-width="1"/>
<line x1="372" y1="349.8" x2="815" y2="349.8" stroke="#e6e6e6" stroke-width="1"/>
<line x1="372" y1="397.8" x2="815" y2="397.8" stroke="#e6e6e6" stroke-width="1"/>
<line x1="372" y1="447" x2="815" y2="447" stroke="#e6e6e6" stroke-width="1"/>
<rect x="380.5" y="155.9" width="11" height="11" fill="#fff" stroke="#505050" stroke-width="1.1"/>
<path d="M381.8 161.5l3 3 5.6-5.9" fill="none" stroke="#505050" stroke-width="1.3"/>
<rect x="380.5" y="204.2" width="11" height="11" fill="#fff" stroke="#505050" stroke-width="1.1"/>
<path d="M381.8 209.8l3 3 5.6-5.9" fill="none" stroke="#505050" stroke-width="1.3"/>
<rect x="380.5" y="252.4" width="11" height="11" fill="#fff" stroke="#505050" stroke-width="1.1"/>
<path d="M381.8 258.0l3 3 5.6-5.9" fill="none" stroke="#505050" stroke-width="1.3"/>
<rect x="380.5" y="300.7" width="11" height="11" fill="#fff" stroke="#505050" stroke-width="1.1"/>
<path d="M381.8 306.3l3 3 5.6-5.9" fill="none" stroke="#505050" stroke-width="1.3"/>
<rect x="380.5" y="360.5" width="11" height="11" fill="#fff" stroke="#505050" stroke-width="1.1"/>
<path d="M381.8 366.1l3 3 5.6-5.9" fill="none" stroke="#505050" stroke-width="1.3"/>
<rect x="380.5" y="408.9" width="11" height="11" fill="#fff" stroke="#505050" stroke-width="1.1"/>
<path d="M381.8 414.5l3 3 5.6-5.9" fill="none" stroke="#505050" stroke-width="1.3"/>
<rect x="380.5" y="457.0" width="11" height="11" fill="#fff" stroke="#505050" stroke-width="1.1"/>
<path d="M381.8 462.6l3 3 5.6-5.9" fill="none" stroke="#505050" stroke-width="1.3"/>
</svg>
<div class="a" style="left:398px;top:156.7px;font-size:10px;font-weight:bold;letter-spacing:-0.22px;color:#161616">Comments, Revisions, Versions, and Annotations</div>
<div class="a" style="left:398px;top:172.3px;font-size:10px;letter-spacing:0.13px;color:#303030">Inspects the document for comments, versions, revision marks, and ink annotations.</div>
<div class="a" style="left:398px;top:205.0px;font-size:10px;font-weight:bold;letter-spacing:-0.22px;color:#161616">Document Properties and Personal Information</div>
<div class="a" style="left:398px;top:220.8px;font-size:10px;letter-spacing:0.13px;color:#303030">Inspects for hidden metadata or personal information saved with the document.</div>
<div class="a" style="left:398px;top:253.2px;font-size:10px;font-weight:bold;letter-spacing:-0.22px;color:#161616">Task Pane Add-ins</div>
<div class="a" style="left:398px;top:269.3px;font-size:10px;letter-spacing:0.13px;color:#303030">Inspects for Task Pane add-ins saved in the document.</div>
<div class="a" style="left:398px;top:301.5px;font-size:10px;font-weight:bold;letter-spacing:-0.22px;color:#161616">Embedded Documents</div>
<div class="a" style="left:398px;top:317.8px;font-size:10px;letter-spacing:0.13px;color:#303030">Inspects for embedded documents, which may include information that’s not visible in</div>
<div class="a" style="left:398px;top:329.3px;font-size:10px;letter-spacing:0.13px;color:#303030">the file.</div>
<div class="a" style="left:398px;top:361.3px;font-size:10px;font-weight:bold;letter-spacing:-0.22px;color:#161616">Macros, Forms, and ActiveX Controls</div>
<div class="a" style="left:398px;top:377.8px;font-size:10px;letter-spacing:0.13px;color:#303030">Inspects for macros, forms, and ActiveX controls.</div>
<div class="a" style="left:398px;top:409.7px;font-size:10px;font-weight:bold;letter-spacing:-0.22px;color:#161616">Collapsed Headings</div>
<div class="a" style="left:398px;top:426.1px;font-size:10px;letter-spacing:0.13px;color:#303030">Inspects the document for text that has been collapsed under a heading.</div>
<div class="a" style="left:398px;top:457.8px;font-size:10px;font-weight:bold;letter-spacing:-0.22px;color:#161616">Custom XML Data</div>
<div class="a" style="left:398px;top:474.3px;font-size:10px;letter-spacing:0.13px;color:#303030">Inspects for custom XML data stored with this document.</div>
<div class="a" style="left:692px;top:503px;width:64px;height:18px;background:#e3e3e3;border:2px solid #3b7dc4"></div>
<div class="a" style="left:766px;top:503px;width:64px;height:18px;background:#e1e1e1;border:1px solid #adadad"></div>
<div class="a" style="left:708px;top:506px;font-size:10px;color:#222;letter-spacing:0px"><u>I</u>nspect</div>
<div class="a" style="left:785px;top:506px;font-size:10px;color:#222"><u>C</u>lose</div>
<div class="a" style="left:540px;top:199px;width:52px;height:52px;border-radius:50%;background:#f8e400;mix-blend-mode:multiply"></div>
<svg class="a" style="left:560px;top:220px" width="20" height="25" viewBox="0 0 20 25"><path d="M6.3 4.9v15.3l3.6-3.5 2.3 5.3 2.3-1-2.3-5.2h5z" fill="#fff" stroke="#111" stroke-width="1"/></svg>
</body></html>
